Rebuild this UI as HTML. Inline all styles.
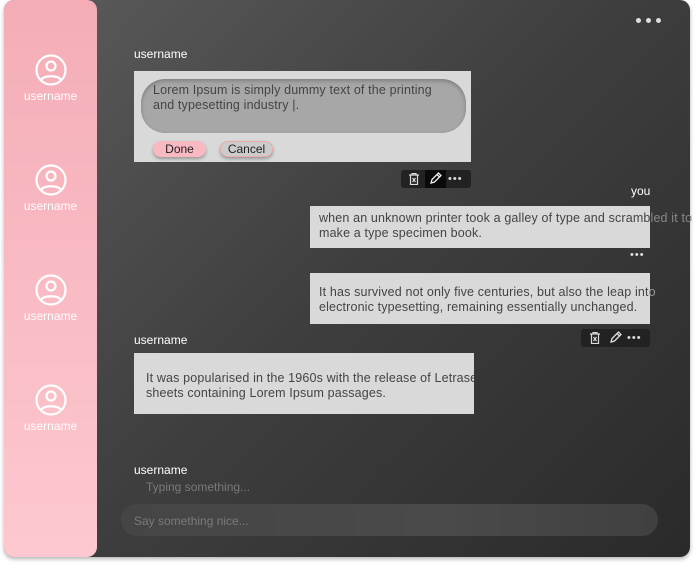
<!DOCTYPE html>
<html><head><style>
*{margin:0;padding:0;box-sizing:border-box}
body{width:698px;height:565px;background:#fff;font-family:"Liberation Sans",sans-serif;position:relative;overflow:hidden}
.main{position:absolute;left:4px;top:0;width:686px;height:557px;border-radius:10px;background:linear-gradient(135deg,#5c5c5c 0%,#3e3e3e 50%,#2a2a2a 100%);box-shadow:0 2px 4px rgba(0,0,0,.3);overflow:hidden}
.side{position:absolute;left:4px;top:0;width:93px;height:557px;border-radius:10px;background:linear-gradient(180deg,#f4adb7,#fdc8cf)}
.u{position:absolute;left:0;width:93px;text-align:center;color:#fff;font-size:12px}
.u svg{display:block;margin:0 auto 2px}
.a{position:absolute;font-size:12px;color:#fff}
.box{position:absolute;background:#d9d9d9;color:#444;font-size:12.5px;line-height:15px}
.t{position:absolute;white-space:nowrap;font-size:12.5px;line-height:15px;color:#444;letter-spacing:0.15px}
.tb{position:absolute;height:18px;background:#222;border-radius:3px}
.dots{position:absolute;color:#ddd;font-size:14px;letter-spacing:1px;line-height:10px}
.d3{position:absolute;display:flex;gap:5px}
.d3 i{display:block;width:5px;height:5px;border-radius:50%;background:#ddd}
</style></head><body>
<div class="main"></div>
<div class="side">
 <div class="u" style="top:53px"><svg width="34" height="34" viewBox="0 0 34 34" fill="none" stroke="#fff" stroke-width="2.2"><circle cx="17" cy="17" r="14.5"/><circle cx="17" cy="13" r="4.5"/><path d="M7 27c3-5 17-5 20 0"/></svg>username</div>
 <div class="u" style="top:163px"><svg width="34" height="34" viewBox="0 0 34 34" fill="none" stroke="#fff" stroke-width="2.2"><circle cx="17" cy="17" r="14.5"/><circle cx="17" cy="13" r="4.5"/><path d="M7 27c3-5 17-5 20 0"/></svg>username</div>
 <div class="u" style="top:273px"><svg width="34" height="34" viewBox="0 0 34 34" fill="none" stroke="#fff" stroke-width="2.2"><circle cx="17" cy="17" r="14.5"/><circle cx="17" cy="13" r="4.5"/><path d="M7 27c3-5 17-5 20 0"/></svg>username</div>
 <div class="u" style="top:383px"><svg width="34" height="34" viewBox="0 0 34 34" fill="none" stroke="#fff" stroke-width="2.2"><circle cx="17" cy="17" r="14.5"/><circle cx="17" cy="13" r="4.5"/><path d="M7 27c3-5 17-5 20 0"/></svg>username</div>
</div>
<div class="d3" style="left:636px;top:18px"><i></i><i></i><i></i></div>

<div class="a" style="left:134px;top:47px">username</div>
<div class="box" style="left:134px;top:71px;width:337px;height:91px">
 <div style="position:absolute;left:7px;top:8px;width:325px;height:54px;border-radius:24px;background:#a7a7a7;box-shadow:inset 0 2px 4px rgba(0,0,0,.25)"></div>
 <div class="t" style="left:19px;top:12px">Lorem Ipsum is simply dummy text of the printing<br>and typesetting industry |.</div>
 <div style="position:absolute;left:19px;top:70px;width:53px;height:16px;border-radius:8px;background:#f8b9c2;box-shadow:0 2px 3px rgba(0,0,0,.3);font-size:12px;text-align:center;line-height:16px;color:#222">Done</div>
 <div style="position:absolute;left:86px;top:70px;width:53px;height:16px;border-radius:8px;background:#ccc;border:1px solid #eaa;box-shadow:0 2px 3px rgba(0,0,0,.3);font-size:12px;text-align:center;line-height:14px;color:#222">Cancel</div>
</div>
<div class="tb" style="left:401px;top:170px;width:70px">
 <div style="position:absolute;left:24px;top:0;width:21px;height:18px;background:#0a0a0a"></div>
 <svg style="position:absolute;left:8px;top:3px" width="10" height="12" viewBox="0 0 10 12" fill="none" stroke="#ddd" stroke-width="1.2"><path d="M0 2h10M3 2V0.5h4V2M1.5 2v9.5h7V2M3.5 5l3 4M6.5 5l-3 4"/></svg>
 <svg style="position:absolute;left:28px;top:2px" width="13" height="13" viewBox="0 0 13 13" fill="none" stroke="#eee" stroke-width="1.3"><path d="M2 11l1-3.5L9.5 1l2.5 2.5L5.5 10zM8 2.5l2.5 2.5"/></svg>
 <div class="dots" style="left:47px;top:4px;font-size:11px">•••</div>
</div>

<div class="a" style="left:631px;top:184px">you</div>
<div class="box" style="left:310px;top:206px;width:340px;height:42px"></div>
<div class="t" style="left:319px;top:211px">when an unknown printer took a galley of type and scramb<span style="color:#888">led it to</span><br>make a type specimen book.</div>
<div class="dots" style="left:630px;top:250px;font-size:11px">•••</div>
<div class="box" style="left:310px;top:273px;width:340px;height:51px"></div>
<div class="t" style="left:319px;top:285px">It has survived not only five centuries, but also the leap int<span style="color:#999">o</span><br>electronic typesetting, remaining essentially unchanged.</div>
<div class="tb" style="left:581px;top:329px;width:69px">
 <svg style="position:absolute;left:9px;top:3px" width="10" height="12" viewBox="0 0 10 12" fill="none" stroke="#ddd" stroke-width="1.2"><path d="M0 2h10M3 2V0.5h4V2M1.5 2v9.5h7V2M3.5 5l3 4M6.5 5l-3 4"/></svg>
 <svg style="position:absolute;left:28px;top:2px" width="13" height="13" viewBox="0 0 13 13" fill="none" stroke="#ddd" stroke-width="1.3"><path d="M2 11l1-3.5L9.5 1l2.5 2.5L5.5 10zM8 2.5l2.5 2.5"/></svg>
 <div class="dots" style="left:46px;top:4px;font-size:11px">•••</div>
</div>

<div class="a" style="left:134px;top:333px">username</div>
<div class="box" style="left:134px;top:353px;width:340px;height:61px;overflow:hidden">
<div class="t" style="left:12px;top:18px">It was popularised in the 1960s with the release of Letrase<br>sheets containing Lorem Ipsum passages.</div></div>

<div class="a" style="left:134px;top:463px">username</div>
<div class="a" style="left:146px;top:480px;color:#7a7a7a">Typing something...</div>
<div style="position:absolute;left:121px;top:504px;width:537px;height:32px;border-radius:16px;background:linear-gradient(90deg,#454545,#4a4a4a 60%,#404040)"></div>
<div class="a" style="left:134px;top:514px;color:#7a7a7a">Say something nice...</div>
</body></html>
